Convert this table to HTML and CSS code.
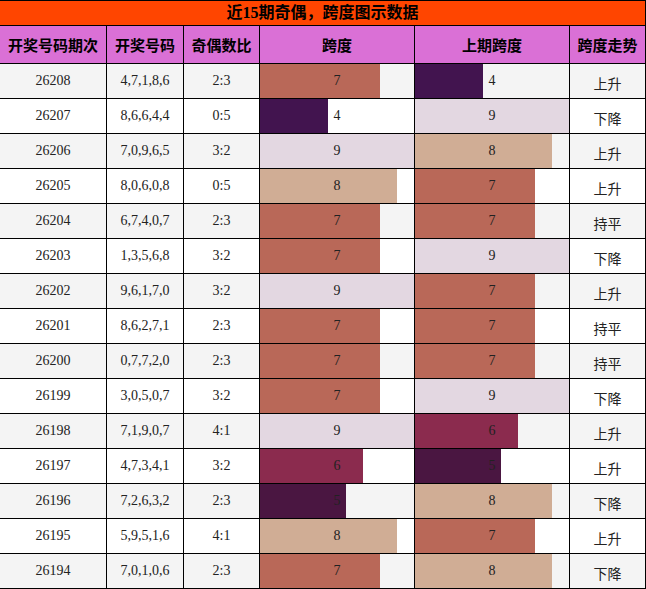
FILE: index.html
```html
<!DOCTYPE html>
<html lang="zh">
<head>
<meta charset="utf-8">
<title>近15期奇偶，跨度图示数据</title>
<link rel="stylesheet" href="styles.css">
</head>
<body>
<div class="board">
  <div class="title">近15期奇偶，跨度图示数据</div>
  <div class="row head">
    <div class="cell">开奖号码期次</div>
    <div class="cell">开奖号码</div>
    <div class="cell">奇偶数比</div>
    <div class="cell">跨度</div>
    <div class="cell">上期跨度</div>
    <div class="cell">跨度走势</div>
  </div>
  <div class="row odd"><div class="cell">26208</div><div class="cell">4,7,1,8,6</div><div class="cell">2:3</div><div class="cell bar v7" style="--w:77.78%">7</div><div class="cell bar v4" style="--w:44.44%">4</div><div class="cell trend">上升</div></div>
  <div class="row"><div class="cell">26207</div><div class="cell">8,6,6,4,4</div><div class="cell">0:5</div><div class="cell bar v4" style="--w:44.44%">4</div><div class="cell bar v9" style="--w:100%">9</div><div class="cell trend">下降</div></div>
  <div class="row odd"><div class="cell">26206</div><div class="cell">7,0,9,6,5</div><div class="cell">3:2</div><div class="cell bar v9" style="--w:100%">9</div><div class="cell bar v8" style="--w:88.89%">8</div><div class="cell trend">上升</div></div>
  <div class="row"><div class="cell">26205</div><div class="cell">8,0,6,0,8</div><div class="cell">0:5</div><div class="cell bar v8" style="--w:88.89%">8</div><div class="cell bar v7" style="--w:77.78%">7</div><div class="cell trend">上升</div></div>
  <div class="row odd"><div class="cell">26204</div><div class="cell">6,7,4,0,7</div><div class="cell">2:3</div><div class="cell bar v7" style="--w:77.78%">7</div><div class="cell bar v7" style="--w:77.78%">7</div><div class="cell trend">持平</div></div>
  <div class="row"><div class="cell">26203</div><div class="cell">1,3,5,6,8</div><div class="cell">3:2</div><div class="cell bar v7" style="--w:77.78%">7</div><div class="cell bar v9" style="--w:100%">9</div><div class="cell trend">下降</div></div>
  <div class="row odd"><div class="cell">26202</div><div class="cell">9,6,1,7,0</div><div class="cell">3:2</div><div class="cell bar v9" style="--w:100%">9</div><div class="cell bar v7" style="--w:77.78%">7</div><div class="cell trend">上升</div></div>
  <div class="row"><div class="cell">26201</div><div class="cell">8,6,2,7,1</div><div class="cell">2:3</div><div class="cell bar v7" style="--w:77.78%">7</div><div class="cell bar v7" style="--w:77.78%">7</div><div class="cell trend">持平</div></div>
  <div class="row odd"><div class="cell">26200</div><div class="cell">0,7,7,2,0</div><div class="cell">2:3</div><div class="cell bar v7" style="--w:77.78%">7</div><div class="cell bar v7" style="--w:77.78%">7</div><div class="cell trend">持平</div></div>
  <div class="row"><div class="cell">26199</div><div class="cell">3,0,5,0,7</div><div class="cell">3:2</div><div class="cell bar v7" style="--w:77.78%">7</div><div class="cell bar v9" style="--w:100%">9</div><div class="cell trend">下降</div></div>
  <div class="row odd"><div class="cell">26198</div><div class="cell">7,1,9,0,7</div><div class="cell">4:1</div><div class="cell bar v9" style="--w:100%">9</div><div class="cell bar v6" style="--w:66.67%">6</div><div class="cell trend">上升</div></div>
  <div class="row"><div class="cell">26197</div><div class="cell">4,7,3,4,1</div><div class="cell">3:2</div><div class="cell bar v6" style="--w:66.67%">6</div><div class="cell bar v5" style="--w:55.56%">5</div><div class="cell trend">上升</div></div>
  <div class="row odd"><div class="cell">26196</div><div class="cell">7,2,6,3,2</div><div class="cell">2:3</div><div class="cell bar v5" style="--w:55.56%">5</div><div class="cell bar v8" style="--w:88.89%">8</div><div class="cell trend">下降</div></div>
  <div class="row"><div class="cell">26195</div><div class="cell">5,9,5,1,6</div><div class="cell">4:1</div><div class="cell bar v8" style="--w:88.89%">8</div><div class="cell bar v7" style="--w:77.78%">7</div><div class="cell trend">上升</div></div>
  <div class="row odd"><div class="cell">26194</div><div class="cell">7,0,1,0,6</div><div class="cell">2:3</div><div class="cell bar v7" style="--w:77.78%">7</div><div class="cell bar v8" style="--w:88.89%">8</div><div class="cell trend">下降</div></div>
</div>
</body>
</html>
```
FILE: styles.css
```css
html, body {
  margin: 0;
  padding: 0;
  background: #ffffff;
}

.board {
  display: flex;
  flex-direction: column;
  gap: 1px;
  padding: 1px;
  width: 645px;
  margin-left: -1px;
  background: #000000;
  font-family: "Liberation Serif", "Noto Sans CJK SC", serif;
  font-size: 14px;
  color: #222222;
}

.title {
  height: 24px;
  line-height: 24px;
  background: #ff4500;
  color: #000000;
  font-weight: bold;
  font-size: 16px;
  text-align: center;
}

.row {
  display: grid;
  grid-template-columns: 106px 76px 75px 154px 154px 75px;
  column-gap: 1px;
  height: 34px;
}

.cell {
  display: flex;
  align-items: center;
  justify-content: center;
  background-color: #ffffff;
  white-space: nowrap;
}

.row.odd .cell {
  background-color: #f4f4f4;
}

.row.head {
  height: 37px;
}

.row.head .cell {
  background-color: #da70d6;
  color: #000000;
  font-weight: bold;
  font-size: 15px;
  font-family: "Noto Sans CJK SC", sans-serif;
}

.trend {
  font-family: "Noto Sans CJK SC", sans-serif;
  padding-top: 3px;
  box-sizing: border-box;
}

.bar {
  background-image: linear-gradient(to right, var(--c) 0, var(--c) var(--w), transparent var(--w));
}

.v4 { --c: #42144f; }
.v5 { --c: #4a1641; }
.v6 { --c: #8b2b4e; }
.v7 { --c: #b96858; }
.v8 { --c: #d0ad95; }
.v9 { --c: #e3d7e1; }
```
